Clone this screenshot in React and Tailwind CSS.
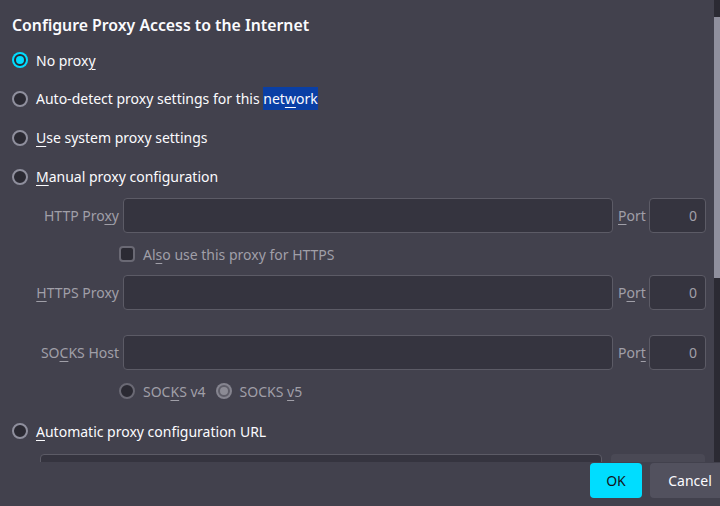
import React from "react";

const Radio = ({ checked, disabled }) => {
  if (checked && disabled) {
    return (
      <span className="w-4 h-4 rounded-full bg-[#85848f] flex items-center justify-center shrink-0">
        <span className="w-3 h-3 rounded-full border-2 border-[#5e5d68] bg-[#8c8b95]" />
      </span>
    );
  }
  if (checked) {
    return (
      <span className="w-4 h-4 rounded-full bg-[#00ddff] flex items-center justify-center shrink-0">
        <span className="w-3 h-3 rounded-full border-2 border-[#2b2a33] bg-[#00ddff]" />
      </span>
    );
  }
  return (
    <span
      className={
        "w-4 h-4 rounded-full border-2 bg-[#2b2a33] shrink-0 " +
        (disabled ? "border-[#6a6974]" : "border-[#8f8f9d]")
      }
    />
  );
};

const U = ({ children }) => <span className="underline underline-offset-[3px]">{children}</span>;

const ProxyRow = ({ label, port, className = "" }) => (
  <div className={"flex items-center pl-[36px] pr-2 " + className}>
    <div className="w-[83px] flex justify-end whitespace-nowrap text-[#a09fa8]">{label}</div>
    <div className="flex-1 ml-1 h-[35px] rounded border border-[#5c5b66] bg-[#35343f]" />
    <div className="w-[36px] pl-[5px] whitespace-nowrap text-[#a09fa8]">{port}</div>
    <div className="w-[57px] h-[35px] rounded border border-[#5c5b66] bg-[#35343f] flex items-center justify-end pr-2 text-[#a09fa8]">
      0
    </div>
  </div>
);

const OptionRow = ({ checked, children, h = "h-[39px]" }) => (
  <div className={"flex items-center pl-3 gap-2 whitespace-nowrap " + h}>
    <Radio checked={checked} />
    <span>{children}</span>
  </div>
);

export default function App() {
  return (
    <div
      className="w-[720px] h-[506px] bg-[#42414d] text-[#fbfbfe] text-[14px] overflow-hidden flex flex-col"
      style={{ fontFamily: '"Noto Sans", "Open Sans", sans-serif' }}
    >
      <div className="h-[462px] shrink-0 flex overflow-hidden">
        <div className="flex-1">
          <div className="h-[41px] pt-[13px] pl-3 leading-[24px] text-[15.8px] font-semibold whitespace-nowrap">
            Configure Proxy Access to the Internet
          </div>
          <OptionRow checked h="h-[38px]">
            No prox<U>y</U>
          </OptionRow>
          <OptionRow>
            Auto-detect proxy settings for this{" "}
            <span className="bg-[#0a3fa5] py-[2px]">
              net<U>w</U>ork
            </span>
          </OptionRow>
          <OptionRow>
            <U>U</U>se system proxy settings
          </OptionRow>
          <OptionRow>
            <U>M</U>anual proxy configuration
          </OptionRow>

          <ProxyRow
            className="mt-[2px]"
            label={<span>HTTP Pro<U>x</U>y</span>}
            port={<span><U>P</U>ort</span>}
          />
          <div className="h-[42px] flex items-center pl-[119px] gap-2 text-[#a09fa8]">
            <span className="w-4 h-4 rounded-sm border-2 border-[#6a6974] bg-[#2b2a33]" />
            <span>
              Al<U>s</U>o use this proxy for HTTPS
            </span>
          </div>
          <ProxyRow label={<span><U>H</U>TTPS Proxy</span>} port={<span>P<U>o</U>rt</span>} />
          <ProxyRow
            className="mt-[25px]"
            label={<span>SO<U>C</U>KS Host</span>}
            port={<span>Por<U>t</U></span>}
          />
          <div className="h-[42px] flex items-center pl-[119px] text-[#a09fa8] whitespace-nowrap">
            <Radio disabled />
            <span className="ml-2">
              SOC<U>K</U>S v4
            </span>
            <span className="ml-[10px]">
              <Radio checked disabled />
            </span>
            <span className="ml-2">
              SOCKS <U>v</U>5
            </span>
          </div>
          <OptionRow h="h-[38px]">
            <U>A</U>utomatic proxy configuration URL
          </OptionRow>
          <div className="flex mt-[4px] pl-[40px] pr-[9px] gap-[9px]">
            <div className="flex-1 h-[35px] rounded border border-[#5c5b66] bg-[#35343f]" />
            <div className="w-[94px] h-[35px] rounded bg-[#4a4955]" />
          </div>
        </div>
        <div className="w-[6px] flex flex-col bg-[#2b2a33]">
          <div className="h-[17px] shrink-0" />
          <div className="h-[261px] shrink-0 bg-[#8f8f9d]" />
        </div>
      </div>
      <div className="flex pl-[590px] pt-px gap-2">
        <button className="w-[52px] h-[35px] shrink-0 rounded bg-[#00ddff] text-[#15141a]">OK</button>
        <button className="w-[80px] h-[35px] shrink-0 rounded bg-[#52515e] text-[#fbfbfe]">Cancel</button>
      </div>
    </div>
  );
}
